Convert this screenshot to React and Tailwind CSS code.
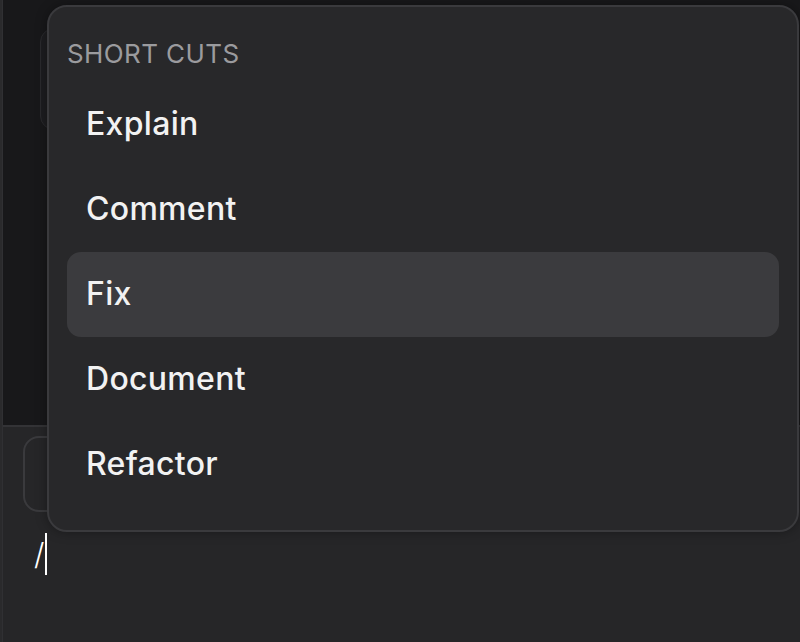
import React from "react";

const items = ["Explain", "Comment", "Fix", "Document", "Refactor"];

export default function App() {
  return (
    <div
      className="relative w-[800px] h-[642px] overflow-hidden bg-[#262628] flex"
      style={{ fontFamily: "Inter, 'Noto Sans', sans-serif" }}
    >
      <div className="w-[3px] h-full bg-[#2a2a2c] border-r border-[#303033]" />
      <div className="flex-1 flex flex-col">
        <div className="h-[427px] bg-[#18181a] border-b-2 border-[#333336] pt-[28px] pl-[37px]">
          <div className="w-[120px] h-[102px] rounded-[14px] bg-[#1d1d20] border border-[#2a2a2d]" />
        </div>
        <div className="pt-[9px] pl-[20px]">
          <div className="h-[76px] w-[600px] rounded-[16px] border-2 border-[#3a3a3d]" />
          <div className="mt-[20px] pl-[11px] flex items-center h-[44px] text-white text-[30px] leading-none">
            <span className="font-light">/</span>
            <span className="ml-[1px] w-[2px] h-[42px] bg-white" />
          </div>
        </div>
      </div>

      <div className="absolute left-[47px] top-[5px] w-[752px] h-[527px] rounded-[20px] border-2 border-[#3a3a3d] bg-[#28282a] px-[18px] pt-[18px] shadow-[0_0_12px_rgba(0,0,0,0.35)]">
        <div className="h-[57px] flex items-center text-[26px] text-[#9b9b9e] tracking-[0.4px]">
          SHORT CUTS
        </div>
        <div className="flex flex-col">
          {items.map((it) => (
            <div
              key={it}
              className={
                it === "Fix"
                  ? "h-[85px] flex items-center pl-[19px] pb-[2px] rounded-[14px] bg-[#3b3b3e] text-[32px] font-medium tracking-[0.3px] text-[#f2f2f2]"
                  : "h-[85px] flex items-center pl-[19px] pb-[2px] rounded-[14px] text-[32px] font-medium tracking-[0.3px] text-[#f2f2f2]"
              }
            >
              {it}
            </div>
          ))}
        </div>
      </div>
    </div>
  );
}
